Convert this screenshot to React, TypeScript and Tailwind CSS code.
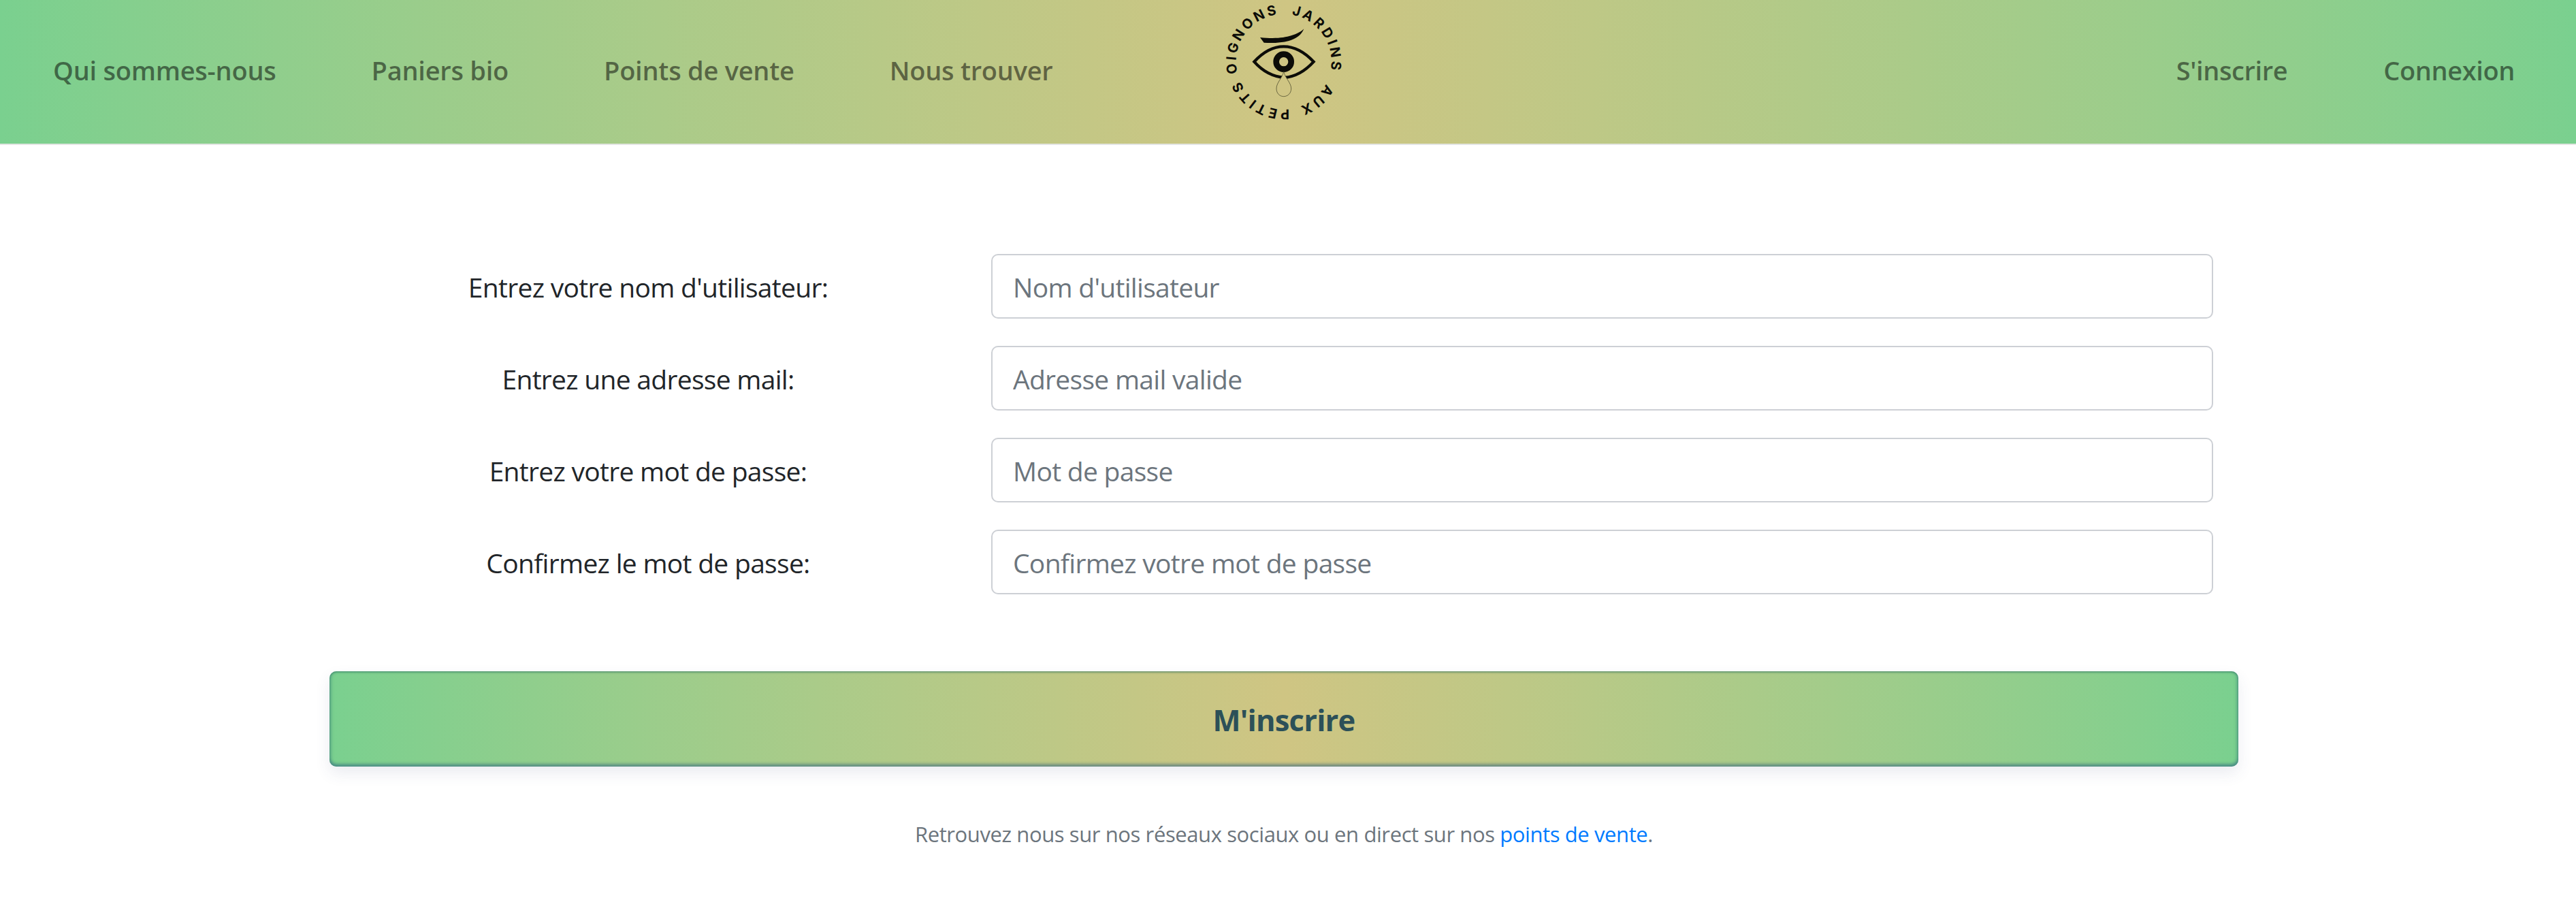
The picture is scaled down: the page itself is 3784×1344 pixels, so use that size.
import React from "react";

const leftLinks = ["Qui sommes-nous", "Paniers bio", "Points de vente", "Nous trouver"];
const rightLinks = ["S'inscrire", "Connexion"];

const fields = [
    { label: "Entrez votre nom d'utilisateur:", placeholder: "Nom d'utilisateur", type: "text" },
    { label: "Entrez une adresse mail:", placeholder: "Adresse mail valide", type: "email" },
    { label: "Entrez votre mot de passe:", placeholder: "Mot de passe", type: "password" },
    { label: "Confirmez le mot de passe:", placeholder: "Confirmez votre mot de passe", type: "password" },
];

// circumference of the text circle (r=210) is about 1319
const logoWords = [
    { word: "JARDINS", offset: 205 },
    { word: "AUX", offset: 513 },
    { word: "PETITS", offset: 773 },
    { word: "OIGNONS", offset: 1118 },
];

function Logo() {
    return (
        <svg viewBox="0 0 780 633" className="w-[260px] h-[211px] shrink-0">
            <defs>
                <path id="logo-circle" d="M437 62 A210 210 0 1 1 436.9 62" fill="none" />
            </defs>
            {logoWords.map((w) => (
                <text key={w.word} className="font-['Inter',sans-serif] font-bold" fontSize="60" letterSpacing="11" fill="#0c0c08" textAnchor="middle">
                    <textPath href="#logo-circle" startOffset={w.offset}>{w.word}</textPath>
                </text>
            ))}
            <path d="M333 165 C400 172 440 166 470 157 C495 149 515 140 526 127 C516 155 490 172 460 180 C425 189 385 191 350 188 Z" fill="#0c0c08" />
            <path d="M307 272 C350 225 395 205 437 205 C480 205 525 225 569 272 C530 315 490 338 440 342 C390 338 345 315 307 272 Z" fill="none" stroke="#0c0c08" strokeWidth="13" strokeLinejoin="miter" />
            <circle cx="437" cy="272" r="33" fill="none" stroke="#0c0c08" strokeWidth="26" />
            <path d="M437 315 C430 345 405 365 405 390 C405 412 420 425 437 425 C454 425 470 412 470 390 C470 365 444 345 437 315 Z" fill="#cfc583" stroke="#3a3a20" strokeWidth="2" />
        </svg>
    );
}

export default function App() {
    return (
        <div className="min-h-[1344px] bg-white font-['Open_Sans',sans-serif]">
            <header className="h-[213px] border-b-2 border-[#e4e6e4] bg-linear-to-r from-[#7ad08f] via-[#cfc583] to-[#7ad08f] flex items-center">
                <nav className="w-[1740px] pl-[78px] flex gap-[140px] pb-[4px]">
                    {leftLinks.map((l) => (
                        <a key={l} href="#" className="text-black/50 text-[38px] font-semibold tracking-[-0.25px] whitespace-nowrap">{l}</a>
                    ))}
                </nav>
                <Logo />
                <nav className="flex-1 pr-[90px] flex justify-end gap-[141px] pb-[4px]">
                    {rightLinks.map((l) => (
                        <a key={l} href="#" className="text-black/50 text-[38px] font-semibold tracking-[-0.4px] whitespace-nowrap">{l}</a>
                    ))}
                </nav>
            </header>

            <main className="pt-[160px] pl-[484px] w-[3288px]">
                <form className="flex flex-col">
                    <div className="flex flex-col gap-[40px] pr-[37px]">
                        {fields.map((f) => (
                            <div key={f.label} className="flex items-center gap-[36px]">
                                <label className="w-[936px] pt-[3px] text-center text-[39px] text-[#212529] tracking-[-0.7px] whitespace-nowrap">{f.label}</label>
                                <input
                                    type="text"
                                    placeholder={f.placeholder}
                                    className="flex-1 h-[95px] pt-[2px] px-[30px] border-2 border-[#cdd0d5] rounded-[10px] bg-white text-[39px] tracking-[-0.7px] outline-none placeholder:text-[#6c757d]"
                                />
                            </div>
                        ))}
                    </div>
                    <button
                        type="button"
                        className="mt-[113px] h-[140px] pt-[3px] rounded-[10px] bg-linear-to-r from-[#7ad08f] via-[#cfc583] to-[#7ad08f] text-[#2c5058] text-[43.5px] font-bold tracking-[-0.8px] shadow-[inset_0_-4px_4px_rgba(40,90,130,0.45),inset_0_2px_2px_rgba(40,110,90,0.35),inset_3px_0_4px_rgba(40,110,110,0.25),inset_-3px_0_4px_rgba(40,110,110,0.25),0_10px_22px_rgba(60,70,120,0.1)]"
                    >
                        M'inscrire
                    </button>
                </form>
                <p className="mt-[76px] text-center text-[31px] text-[#6c757d] tracking-[-0.4px] whitespace-nowrap">
                    Retrouvez nous sur nos réseaux sociaux ou en direct sur nos <a href="#" className="text-[#007bff]">points de vente</a>.
                </p>
            </main>
        </div>
    );
}
